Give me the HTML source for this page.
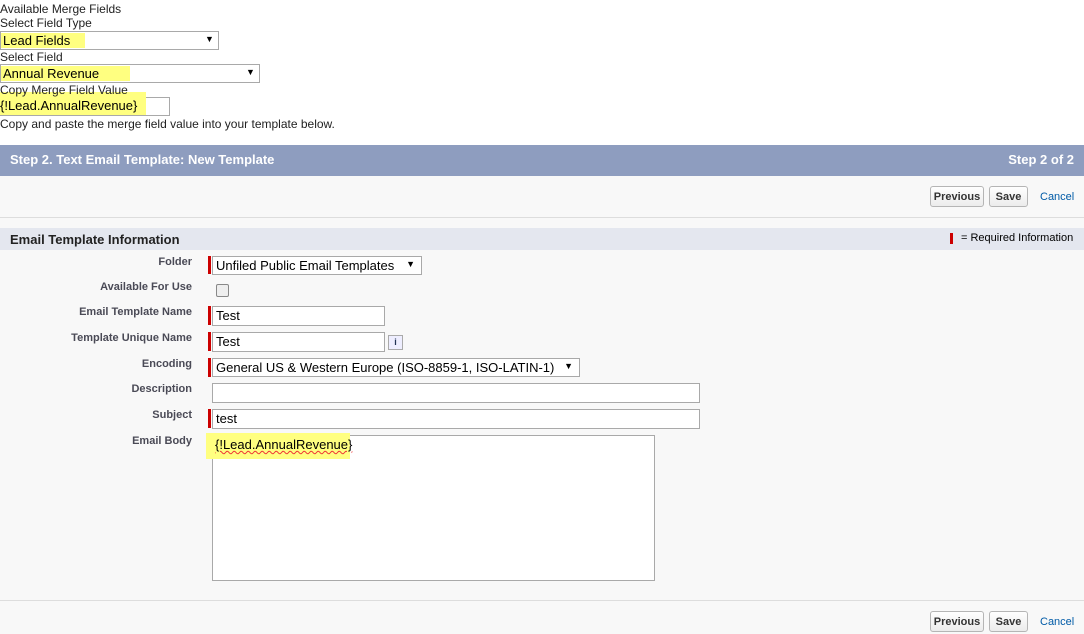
<!DOCTYPE html><html><head><style>
body{margin:0;width:1084px;height:634px;overflow:hidden;background:#fff;font-family:"Liberation Sans",Arial,sans-serif;position:relative}
.a{position:absolute;white-space:nowrap}
.t{font-size:12px;color:#222}
.hl{position:absolute;background:#ffff80}
.sel{position:absolute;border:1px solid #a9a9a9;background:#fff;box-sizing:border-box;font-size:13px;color:#000;padding:1px 3px}
.sel i{position:absolute;right:6px;top:2px;font-style:normal;font-size:9px}
.lbl{position:absolute;right:892px;font-size:11px;font-weight:bold;color:#4a4a56;text-align:right}
.req{position:absolute;left:208px;width:3px;background:#c00}
.btn{position:absolute;border:1px solid #b5b5b5;border-radius:3px;background:linear-gradient(#fff,#ececec);font-size:11px;font-weight:bold;color:#333;box-sizing:border-box;text-align:center;line-height:20px;height:21px}
.lnk{position:absolute;font-size:11px;color:#015ba7}
</style></head><body>
<div class="a t" style="left:0;top:2px">Available Merge Fields</div>
<div class="a t" style="left:0;top:16px">Select Field Type</div>
<div class="sel" style="left:0;top:31px;width:219px;height:19px"></div>
<div class="hl" style="left:1px;top:33px;width:84px;height:15px"></div>
<div class="a" style="left:3px;top:33px;font-size:13px">Lead Fields</div>
<div class="a" style="left:205px;top:34px;font-size:9px">▼</div>
<div class="a t" style="left:0;top:50px">Select Field</div>
<div class="sel" style="left:0;top:64px;width:260px;height:19px"></div>
<div class="hl" style="left:1px;top:66px;width:129px;height:15px"></div>
<div class="a" style="left:3px;top:66px;font-size:13px">Annual Revenue</div>
<div class="a" style="left:246px;top:67px;font-size:9px">▼</div>
<div class="sel" style="left:0;top:97px;width:170px;height:19px"></div>
<div class="hl" style="left:0;top:92px;width:146px;height:23px"></div>
<div class="a t" style="left:0;top:83px">Copy Merge Field Value</div>
<div class="a" style="left:0;top:98px;font-size:13px">{!Lead.AnnualRevenue}</div>
<div class="a t" style="left:0;top:117px">Copy and paste the merge field value into your template below.</div>

<div class="a" style="left:0;top:145px;width:1084px;height:31px;background:#8e9dbf"></div>
<div class="a" style="left:10px;top:152px;font-size:13px;font-weight:bold;color:#fff">Step 2. Text Email Template: New Template</div>
<div class="a" style="right:10px;top:152px;font-size:13px;font-weight:bold;color:#fff">Step 2 of 2</div>
<div class="a" style="left:0;top:176px;width:1084px;height:458px;background:#f8f8f8"></div>
<div class="btn" style="left:930px;top:186px;width:54px">Previous</div>
<div class="btn" style="left:989px;top:186px;width:39px">Save</div>
<div class="lnk" style="left:1040px;top:191px">Cancel</div>
<div class="a" style="left:0;top:217px;width:1084px;height:1px;background:#ddd"></div>
<div class="a" style="left:0;top:228px;width:1084px;height:22px;background:#e4e7ef"></div>
<div class="a" style="left:10px;top:232px;font-size:13px;font-weight:bold;color:#222">Email Template Information</div>
<div class="a" style="left:950px;top:233px;width:3px;height:11px;background:#c00"></div>
<div class="a" style="left:961px;top:232px;font-size:11px;color:#000">= Required Information</div>

<div class="lbl" style="top:256px">Folder</div>
<div class="req" style="top:256px;height:18px"></div>
<div class="sel" style="left:212px;top:256px;width:210px;height:19px">Unfiled Public Email Templates<i>▼</i></div>
<div class="lbl" style="top:281px">Available For Use</div>
<div class="a" style="left:216px;top:284px;width:11px;height:11px;border:1px solid #888;border-radius:2px;background:#eee"></div>
<div class="lbl" style="top:306px">Email Template Name</div>
<div class="req" style="top:306px;height:19px"></div>
<div class="sel" style="left:212px;top:306px;width:173px;height:20px">Test</div>
<div class="lbl" style="top:332px">Template Unique Name</div>
<div class="req" style="top:332px;height:19px"></div>
<div class="sel" style="left:212px;top:332px;width:173px;height:20px">Test</div>
<div class="a" style="left:388px;top:335px;width:13px;height:13px;border:1px solid #aaa;background:#eef;font-size:9px;font-weight:bold;color:#235;text-align:center;line-height:13px">i</div>
<div class="lbl" style="top:358px">Encoding</div>
<div class="req" style="top:358px;height:19px"></div>
<div class="sel" style="left:212px;top:358px;width:368px;height:19px">General US &amp; Western Europe (ISO-8859-1, ISO-LATIN-1)<i>▼</i></div>
<div class="lbl" style="top:383px">Description</div>
<div class="sel" style="left:212px;top:383px;width:488px;height:20px"></div>
<div class="lbl" style="top:409px">Subject</div>
<div class="req" style="top:409px;height:19px"></div>
<div class="sel" style="left:212px;top:409px;width:488px;height:20px">test</div>
<div class="lbl" style="top:435px">Email Body</div>
<div class="sel" style="left:212px;top:435px;width:443px;height:146px"></div>
<div class="hl" style="left:206px;top:433px;width:144px;height:26px"></div>
<div class="a" style="left:215px;top:437px;font-size:13px;text-decoration:underline wavy #e33;text-decoration-thickness:1px">{!Lead.AnnualRevenue}</div>
<div class="a" style="left:0;top:600px;width:1084px;height:1px;background:#ddd"></div>
<div class="btn" style="left:930px;top:611px;width:54px">Previous</div>
<div class="btn" style="left:989px;top:611px;width:39px">Save</div>
<div class="lnk" style="left:1040px;top:616px">Cancel</div>
</body></html>
